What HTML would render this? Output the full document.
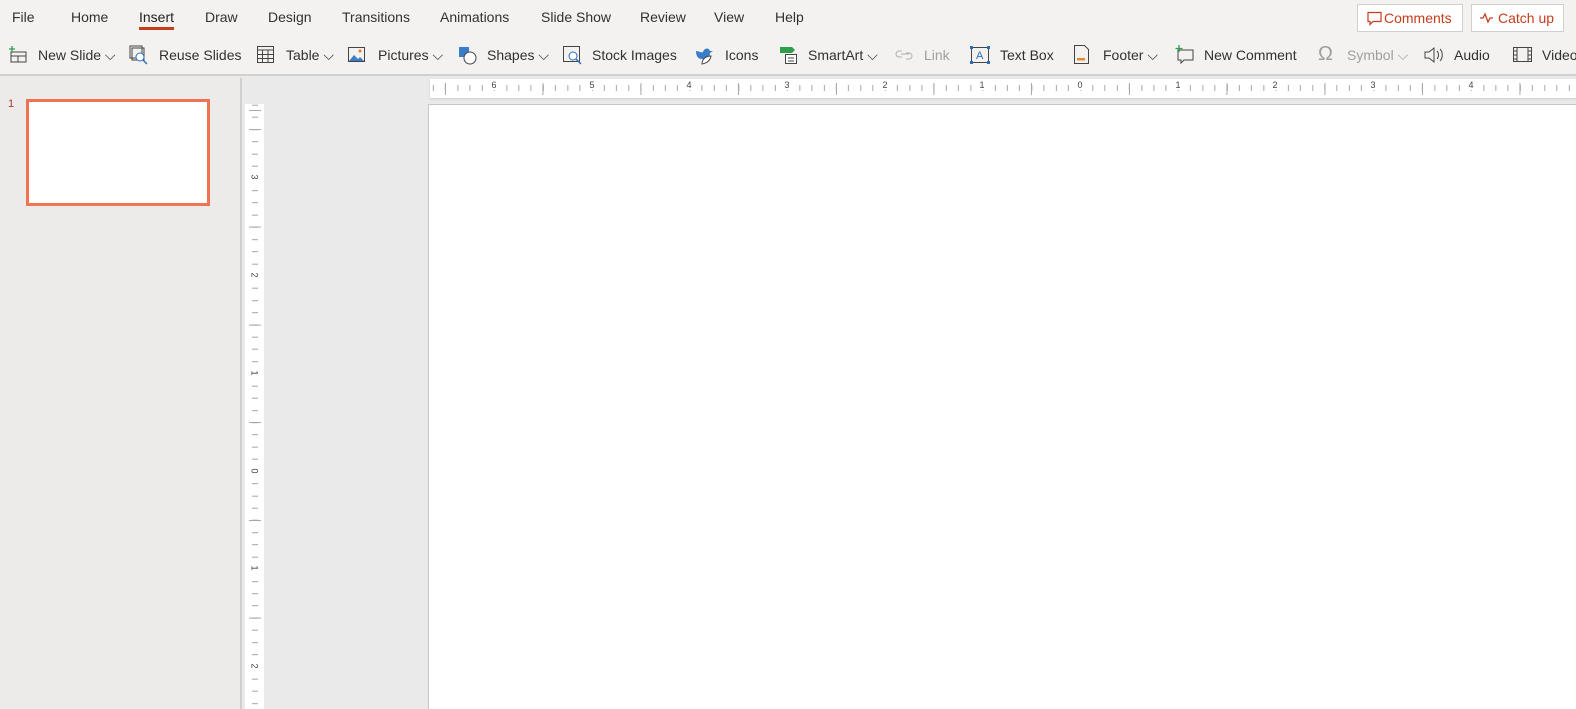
<!DOCTYPE html>
<html><head><meta charset="utf-8"><style>
*{box-sizing:border-box;margin:0;padding:0}
body{width:1576px;height:709px;overflow:hidden;background:#eaeaea;font-family:"Liberation Sans",sans-serif;color:#323130;position:relative}
.top{position:absolute;left:0;top:0;width:1576px;height:76px;background:#f3f2f1;border-bottom:2px solid #d2d0ce}
.tab{position:absolute;top:9px;font-size:14px}
.tb{position:absolute;top:47px;font-size:14px;white-space:nowrap}
.tb svg{position:absolute}
.btn{position:absolute;top:4px;height:28px;border:1px solid #d2d0ce;background:#fff;color:#c43e1c;font-size:14px;padding:5px 6px 0 26px;white-space:nowrap}
.left{position:absolute;left:0;top:78px;width:242px;height:631px;background:#edebe9;border-right:2px solid #d2d0ce}
.hr{position:absolute;left:430px;top:79px;width:1146px;height:19px;background:#fff;
background-image:linear-gradient(#fff,#fff),repeating-linear-gradient(90deg,#a8a6a4 0 1px,transparent 1px 97.7px),repeating-linear-gradient(90deg,#a8a6a4 0 1px,transparent 1px 12.2125px);
background-size:100% 4px,100% 12px,100% 6px;background-position:0 0,14.95px 4px,2.87px 6px;background-repeat:no-repeat,repeat-x,repeat-x;box-shadow:0 1px 2px #ccc}
.vr{position:absolute;left:245px;top:104px;width:19px;height:605px;background:#fff;
background-image:repeating-linear-gradient(180deg,#a8a6a4 0 1px,transparent 1px 97.7px),repeating-linear-gradient(180deg,#a8a6a4 0 1px,transparent 1px 12.2125px);
background-size:12px 100%,6px 100%;background-position:4px 25.05px,7px 0.7px;background-repeat:repeat-y}
.hl{position:absolute;top:1px;font-size:9px;background:#fff;width:8px;text-align:center;color:#444}
.vl{position:absolute;left:5px;font-size:9px;background:#fff;height:8px;width:9px;text-align:center;transform:rotate(90deg);line-height:9px;color:#444}
.slide{position:absolute;left:428px;top:104px;width:1148px;height:605px;background:#fff;border-left:1px solid #c8c6c4;border-top:1px solid #c8c6c4}
.dis{color:#a19f9d}
</style></head><body>
<div class="top">
<span class="tab" style="left:12px">File</span>
<span class="tab" style="left:71px">Home</span>
<span class="tab" style="left:139px;color:#201f1e">Insert</span>
<div style="position:absolute;left:139px;top:27px;width:35px;height:3px;background:#c43e1c"></div>
<span class="tab" style="left:205px">Draw</span>
<span class="tab" style="left:268px">Design</span>
<span class="tab" style="left:342px">Transitions</span>
<span class="tab" style="left:440px">Animations</span>
<span class="tab" style="left:541px">Slide Show</span>
<span class="tab" style="left:640px">Review</span>
<span class="tab" style="left:714px">View</span>
<span class="tab" style="left:775px">Help</span>
<div class="btn" style="left:1357px;width:106px">Comments<svg style="position:absolute;left:9px;top:6px" width="15" height="15" viewBox="0 0 15 15"><path d="M1 1.5h13v9H6l-3 3v-3H1z" fill="none" stroke="#c43e1c" stroke-width="1.2"/></svg></div>
<div class="btn" style="left:1471px;width:93px">Catch up<svg style="position:absolute;left:7px;top:7px" width="16" height="12" viewBox="0 0 16 12"><path d="M1 6h3l2-4 3 8 2-4h3" fill="none" stroke="#c43e1c" stroke-width="1.3"/></svg></div>

<span class="tb" style="left:38px">New Slide ⌵</span>
<svg style="position:absolute;left:8px;top:46px" width="20" height="18"><path d="M3 6h15v10H3zM3 10h15M10 10v6" fill="none" stroke="#444"/><path d="M4 0v6M1 3h6" stroke="#2e9e4a" stroke-width="1.3"/></svg>
<span class="tb" style="left:159px">Reuse Slides</span>
<svg style="position:absolute;left:129px;top:45px" width="22" height="20"><path d="M1 1h12v12H1zM3 3h12v12H3z" fill="none" stroke="#444"/><circle cx="11" cy="12" r="4" fill="#fff" stroke="#2a6fbb"/><path d="M14 15l4 4" stroke="#2a6fbb" stroke-width="1.4"/></svg>
<span class="tb" style="left:286px">Table ⌵</span>
<svg style="position:absolute;left:257px;top:46px" width="18" height="18"><path d="M.5.5h16v16H.5zM.5 4h16M.5 8.5h16M.5 12.5h16M5.5 4v13M11 4v13" fill="none" stroke="#444"/></svg>
<span class="tb" style="left:378px">Pictures ⌵</span>
<svg style="position:absolute;left:348px;top:47px" width="18" height="16"><rect x=".5" y=".5" width="16" height="14" fill="none" stroke="#444"/><path d="M1 14l5-6 4 4 2-2 4 4z" fill="#3a7ec9"/><circle cx="12" cy="4" r="1.5" fill="#e87b2a"/></svg>
<span class="tb" style="left:487px">Shapes ⌵</span>
<svg style="position:absolute;left:458px;top:46px" width="20" height="20"><rect x="1" y="1" width="10" height="10" fill="#3a7ec9"/><circle cx="12" cy="12" r="6" fill="#fff" stroke="#444"/></svg>
<span class="tb" style="left:592px">Stock Images</span>
<svg style="position:absolute;left:563px;top:46px" width="20" height="20"><rect x=".5" y=".5" width="16" height="15" fill="none" stroke="#444"/><circle cx="10" cy="10" r="4" fill="#fff" stroke="#2a6fbb"/><path d="M13 13l5 5" stroke="#2a6fbb" stroke-width="1.4"/></svg>
<span class="tb" style="left:725px">Icons</span>
<svg style="position:absolute;left:694px;top:45px" width="22" height="20"><path d="M2 6c3 0 5 2 7 1 1-4 6-5 7-1l3 0-3 2c0 4-3 6-8 6-4 0-6-3-6-8z" fill="#3a7ec9"/><path d="M8 19c0-5 4-8 9-8-1 5-4 7-9 8z" fill="#fff" stroke="#444"/></svg>
<span class="tb" style="left:808px">SmartArt ⌵</span>
<svg style="position:absolute;left:779px;top:46px" width="20" height="20"><path d="M1 1h12l3 3-3 3H1z" fill="#2e9e4a"/><rect x="6.5" y="8.5" width="11" height="9" fill="#fff" stroke="#444"/><path d="M9 12h6M9 15h6" stroke="#444"/></svg>
<span class="tb dis" style="left:924px">Link</span>
<svg style="position:absolute;left:895px;top:49px" width="20" height="12"><path d="M7 2H4a3 3 0 000 6h3M11 4h3a3 3 0 010 6h-3M6 5h8" fill="none" stroke="#b3b0ad"/></svg>
<span class="tb" style="left:1000px">Text Box</span>
<svg style="position:absolute;left:970px;top:46px" width="20" height="18"><rect x="1.5" y="1.5" width="17" height="15" fill="none" stroke="#444"/><g fill="#2a6fbb"><rect x="0" y="0" width="3" height="3"/><rect x="17" y="0" width="3" height="3"/><rect x="0" y="15" width="3" height="3"/><rect x="17" y="15" width="3" height="3"/></g><text x="6" y="13" font-size="11" fill="#2a6fbb" font-family="Liberation Sans">A</text></svg>
<span class="tb" style="left:1103px">Footer ⌵</span>
<svg style="position:absolute;left:1074px;top:45px" width="16" height="20"><path d="M.5.5h10l4 4v14H.5z" fill="none" stroke="#444"/><rect x="3" y="13" width="8" height="2.5" fill="#e8892a"/></svg>
<span class="tb" style="left:1204px">New Comment</span>
<svg style="position:absolute;left:1174px;top:44px" width="22" height="22"><path d="M4 6h15v10h-9l-3 3v-3H4z" fill="none" stroke="#444"/><path d="M5 1v7M1.5 4.5h7" stroke="#2e9e4a" stroke-width="1.3"/></svg>
<span class="tb dis" style="left:1347px">Symbol ⌵</span>
<span class="tb dis" style="left:1318px;font-size:20px;top:43px">Ω</span>
<span class="tb" style="left:1454px">Audio</span>
<svg style="position:absolute;left:1424px;top:46px" width="20" height="18"><path d="M1 6h4l5-4v14l-5-4H1z" fill="none" stroke="#444"/><path d="M13 5c2 2 2 6 0 8M16 3c3 3 3 9 0 12" fill="none" stroke="#444"/></svg>
<span class="tb" style="left:1542px">Video</span>
<svg style="position:absolute;left:1513px;top:47px" width="20" height="16"><rect x=".5" y=".5" width="18" height="14" fill="none" stroke="#444"/><path d="M4 1v14M15 1v14M1 4h3M1 8h3M1 12h3M15 4h3M15 8h3M15 12h3" stroke="#444"/></svg>
</div>

<div class="left">
<span style="position:absolute;left:8px;top:20px;font-size:11px;color:#a4373a">1</span>
<div style="position:absolute;left:26px;top:21px;width:184px;height:107px;border:3px solid #f07352;background:#fff"></div>
</div>

<div class="hr">
<span class="hl" style="left:60px">6</span><span class="hl" style="left:158px">5</span><span class="hl" style="left:255px">4</span><span class="hl" style="left:353px">3</span><span class="hl" style="left:451px">2</span><span class="hl" style="left:548px">1</span><span class="hl" style="left:646px">0</span><span class="hl" style="left:744px">1</span><span class="hl" style="left:841px">2</span><span class="hl" style="left:939px">3</span><span class="hl" style="left:1037px">4</span>
</div>
<div class="vr">
<span class="vl" style="top:69px">3</span><span class="vl" style="top:167px">2</span><span class="vl" style="top:265px">1</span><span class="vl" style="top:363px">0</span><span class="vl" style="top:460px">1</span><span class="vl" style="top:558px">2</span>
</div>
<div class="slide"></div>
</body></html>
